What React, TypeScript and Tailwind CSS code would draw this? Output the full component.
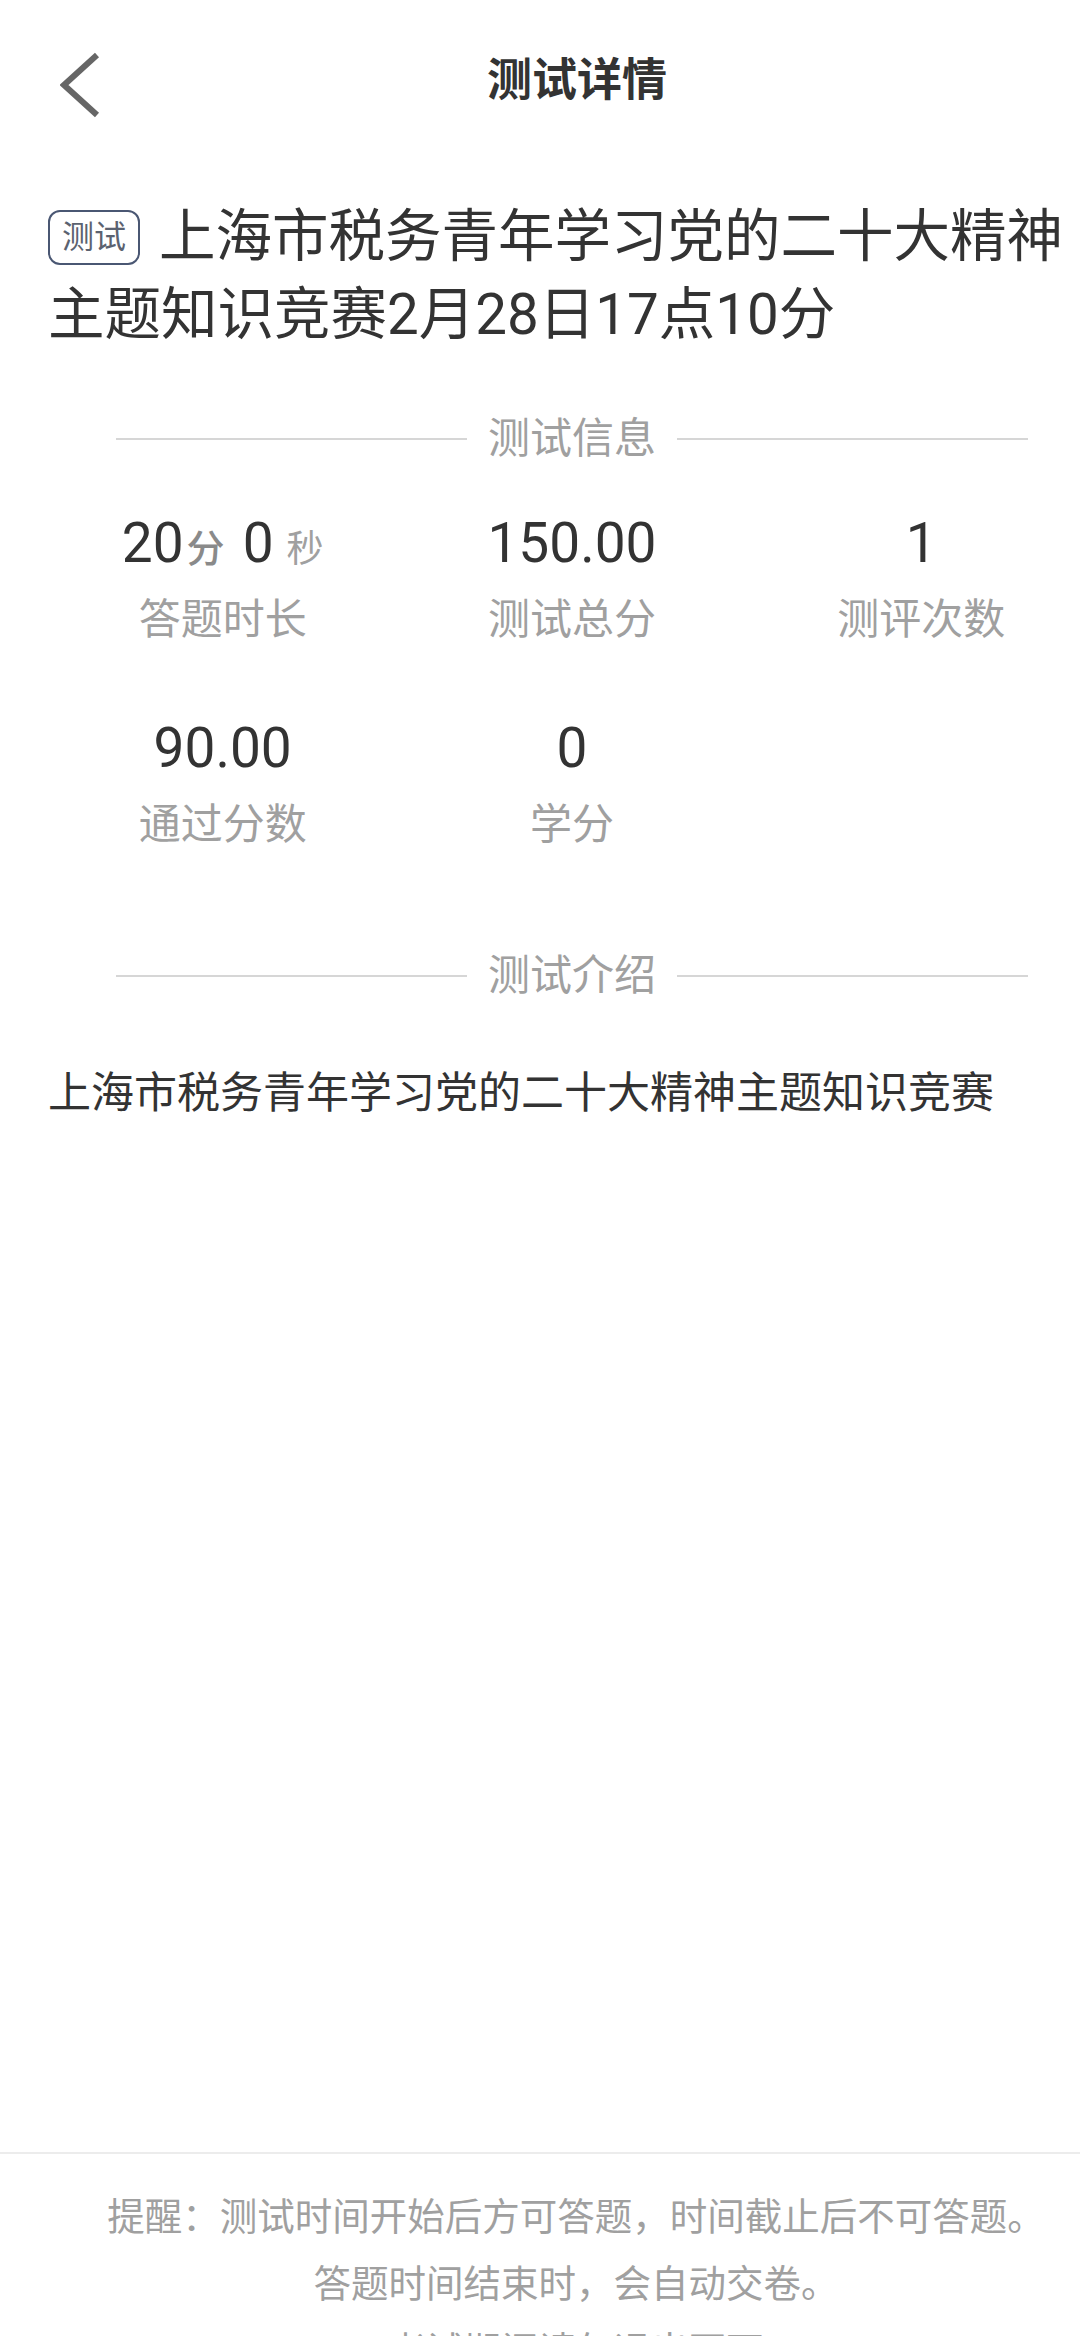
import React from 'react';

const stats = [
  { key: 'duration', label: '答题时长' },
  { key: 'total', label: '测试总分', value: '150.00' },
  { key: 'times', label: '测评次数', value: '1' },
  { key: 'pass', label: '通过分数', value: '90.00' },
  { key: 'credit', label: '学分', value: '0' },
];

const SectionDivider: React.FC<{ title: string }> = ({ title }) => (
  <div className="mx-[68px] h-[60px] flex items-center gap-[21px]">
    <div className="flex-1 h-[2px] bg-[#d6d6d6]" />
    <span className="text-[42px] leading-none text-[#a0a0a0]">{title}</span>
    <div className="flex-1 h-[2px] bg-[#d6d6d6]" />
  </div>
);

export default function App() {
  return (
    <div className="w-full h-[2336px] overflow-hidden bg-white">
      <div className="w-[1144px] h-full flex flex-col font-['Roboto','Noto_Sans_CJK_SC',sans-serif] text-[#333]">
        {/* Header */}
        <header className="h-[160px] shrink-0 grid grid-cols-[1fr_auto_1fr] items-center">
          <button className="justify-self-start ml-[60px] mt-[10px] w-[40px] h-[66px]">
            <svg width="40" height="66" viewBox="0 0 40 66" fill="none">
              <path d="M37 3 L4 33 L37 63" stroke="#666" strokeWidth="6" strokeLinejoin="miter" />
            </svg>
          </button>
          <h1 className="ml-[10px] text-[45px] font-bold leading-none text-[#333]">测试详情</h1>
          <div />
        </header>

        <main className="flex-1 px-[48px]">
          {/* Title */}
          <div className="pt-[38px] text-[56.5px] leading-[78px] text-[#333]">
            <span className="inline-flex items-center justify-center w-[92px] h-[55px] mr-[19px] border-[2.5px] border-[#4a5773] rounded-[12px] text-[32px] leading-none text-[#5b6270] align-middle relative -top-[4px]">测试</span>
            上海市税务青年学习党的二十大精神主题知识竞赛2月28日17点10分
          </div>

          <div className="mt-[55px]">
            <SectionDivider title="测试信息" />
          </div>

          {/* Stats */}
          <div className="mt-[39px] grid grid-cols-3 gap-y-[65px]">
            {stats.map((s) => (
              <div key={s.key} className="flex flex-col items-center">
                <div className="h-[70px] leading-[70px] text-[55px] text-[#333] whitespace-nowrap">
                  {s.key === 'duration' ? (
                    <>
                      <span>20</span>
                      <span className="ml-[3px] text-[38px] font-medium text-[#8a8a8a]">分</span>
                      <span className="ml-[18px]">0</span>
                      <span className="ml-[13px] text-[37px] text-[#a0a0a0]">秒</span>
                    </>
                  ) : (
                    s.value
                  )}
                </div>
                <div className="mt-[14px] text-[42px] leading-[56px] text-[#a0a0a0]">{s.label}</div>
              </div>
            ))}
          </div>

          <div className="mt-[93px]">
            <SectionDivider title="测试介绍" />
          </div>

          <p className="mt-[57px] text-[43px] leading-[60px] text-[#333]">上海市税务青年学习党的二十大精神主题知识竞赛</p>
        </main>

        {/* Footer notice */}
        <footer className="h-[184px] shrink-0 overflow-hidden border-t-2 border-[#ececec] pt-[30px] pl-[8px] text-center text-[37.5px] leading-[67px] text-[#a0a0a0]">
          <p>提醒：测试时间开始后方可答题，时间截止后不可答题。</p>
          <p>答题时间结束时，会自动交卷。</p>
          <p>考试期间请勿退出页面</p>
        </footer>
      </div>
    </div>
  );
}
